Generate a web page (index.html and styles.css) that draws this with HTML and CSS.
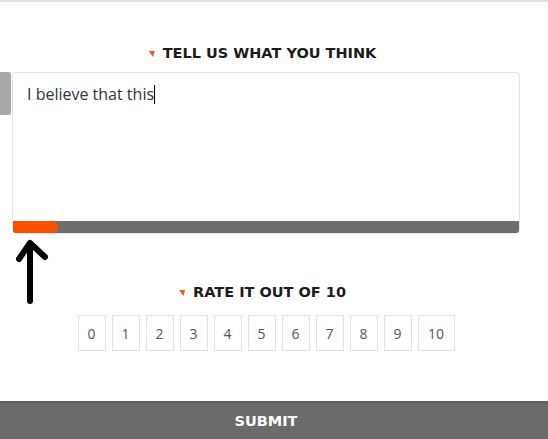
FILE: index.html
```html
<!DOCTYPE html>
<html lang="en">
<head>
    <meta charset="UTF-8">
    <title>Feedback</title>
    <link rel="stylesheet" href="styles.css">
</head>
<body>

<div class="topline"></div>

<div class="page">
    <div class="field">
        <h2 class="label"><span class="mark"></span>TELL US WHAT YOU THINK</h2>
        <div class="box-row">
            <div class="handle"></div>
            <div class="box">
                <div class="text">I believe that this<span class="caret"></span></div>
                <div class="meter"><div class="meter-fill"></div></div>
            </div>
        </div>
        <svg class="arrow" width="40" height="72" viewBox="0 0 40 72">
            <path d="M14 64 L14 6 M3 22 L14 6 L29 20" fill="none" stroke="#000" stroke-width="6" stroke-linecap="round" stroke-linejoin="round"/>
        </svg>
    </div>

    <div class="field rate">
        <h2 class="label"><span class="mark"></span>RATE IT OUT OF 10</h2>
        <div class="scores">
            <span class="score">0</span>
            <span class="score">1</span>
            <span class="score">2</span>
            <span class="score">3</span>
            <span class="score">4</span>
            <span class="score">5</span>
            <span class="score">6</span>
            <span class="score">7</span>
            <span class="score">8</span>
            <span class="score">9</span>
            <span class="score wide">10</span>
        </div>
    </div>
</div>

<div class="submit"><span>SUBMIT</span></div>

</body>
</html>
```

FILE: styles.css
```css
body {
    margin: 0;
    padding: 0;
    background-color: #fff;
    font-family: "Open Sans", sans-serif;
    width: 548px;
    height: 439px;
    overflow: hidden;
}
.topline {
    height: 2px;
    background-color: #e2e2e2;
}
.page {
    width: 532px;
    height: 399px;
}
.label {
    margin: 0;
    display: flex;
    align-items: center;
    justify-content: center;
    gap: 8px;
    padding-right: 7px;
    font-family: "DejaVu Sans", sans-serif;
    font-weight: bold;
    font-size: 14.5px;
    color: #1c1c1c;
    height: 20px;
}
.field {
    padding-top: 41px;
}
.mark {
    width: 6px;
    height: 6px;
    background-color: #f05a1a;
    clip-path: polygon(0 0, 100% 0, 75% 100%);
    margin-top: 2px;
}
.box-row {
    display: flex;
    margin-top: 9px;
}
.handle {
    width: 11px;
    height: 43px;
    background-color: #a9a9a9;
    border-radius: 0 2px 2px 0;
    margin-right: 1px;
}
.box {
    width: 506px;
    height: 160px;
    border: 1px solid #e4e4e4;
    border-radius: 4px;
    display: flex;
    flex-direction: column;
    overflow: hidden;
}
.text {
    flex: 1;
    padding: 10px 14px;
    font-size: 16px;
    color: #333;
    line-height: 22px;
}
.caret {
    display: inline-block;
    width: 1px;
    height: 19px;
    background-color: #000;
    vertical-align: -4px;
}
.meter {
    height: 12px;
    background-color: #6e6e6e;
}
.meter-fill {
    width: 45px;
    height: 12px;
    background-color: #ff5000;
    border-radius: 5px;
}
.arrow {
    display: block;
    margin: 3px 0 0 16px;
}
.rate {
    padding-top: 0;
    margin-top: -27px;
}
.scores {
    display: flex;
    justify-content: center;
    gap: 6px;
    margin-top: 13px;
}
.score {
    width: 26px;
    height: 34px;
    border: 1px solid #e2e2e2;
    display: flex;
    align-items: center;
    justify-content: center;
    font-size: 14px;
    color: #555;
}
.score.wide {
    width: 35px;
}
.submit {
    height: 38px;
    background-color: #6b6b6b;
    border-top: 2px solid #5c5c5c;
    box-sizing: border-box;
    display: flex;
    align-items: center;
    justify-content: center;
    padding-right: 16px;
    font-family: "DejaVu Sans", sans-serif;
    font-weight: bold;
    font-size: 14.5px;
    color: #fff;
}
```
